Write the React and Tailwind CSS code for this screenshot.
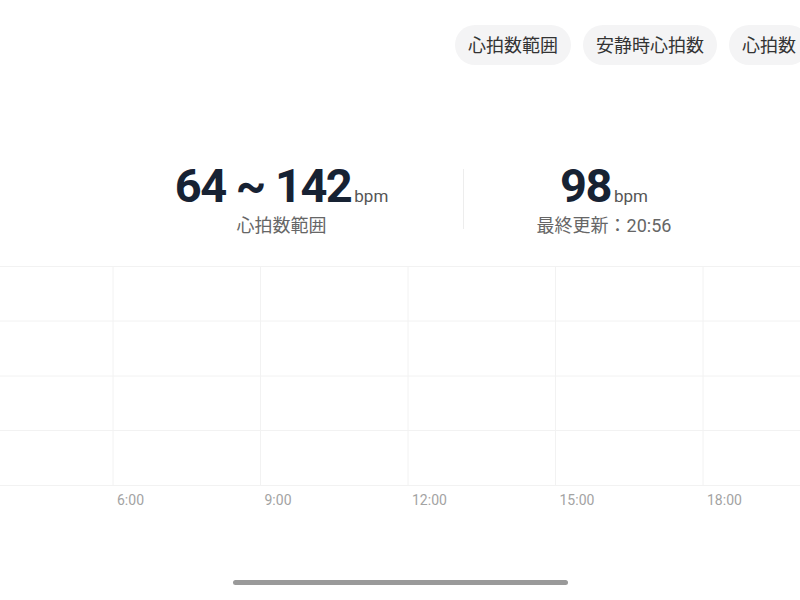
import React from "react";

const chips = ["心拍数範囲", "安静時心拍数", "心拍数"];
const hours = ["6:00", "9:00", "12:00", "15:00", "18:00"];

function Stat({ value, label, width }) {
  return (
    <div className={`flex flex-col items-center ${width}`}>
      <div className="flex items-baseline leading-none">
        <span className="text-[47px] font-bold tracking-[-1.5px] text-[#172233]">{value}</span>
        <span className="ml-[3px] text-[17px] text-[#555]">bpm</span>
      </div>
      <div className="mt-[8px] text-[18px] leading-none text-[#666]">{label}</div>
    </div>
  );
}

function Grid() {
  const xs = [113, 260.5, 408, 555.5, 703];
  const ys = [0.5, 55, 110, 164.5, 219.5];
  return (
    <svg width="800" height="220" className="block">
      {ys.map((y) => (
        <line key={y} x1="0" x2="800" y1={y} y2={y} stroke="#f2f2f2" strokeWidth="1" />
      ))}
      {xs.map((x) => (
        <line key={x} x1={x} x2={x} y1="0" y2="220" stroke="#f2f2f2" strokeWidth="1" />
      ))}
    </svg>
  );
}

export default function App() {
  return (
    <div
      className="w-[800px] h-[600px] bg-white overflow-hidden flex flex-col"
      style={{ fontFamily: '"Roboto", "Noto Sans CJK JP", sans-serif' }}
    >
      <div className="flex gap-3 pl-[455px] pt-[25px] whitespace-nowrap">
        {chips.map((c) => (
          <div
            key={c}
            className="h-[40px] px-[13px] rounded-full bg-[#f4f4f5] flex items-center text-[18px] text-[#333] shrink-0"
          >
            {c}
          </div>
        ))}
      </div>

      <div className="flex items-center mt-[97px] pl-[100px]">
        <Stat value="64 ~ 142" label="心拍数範囲" width="w-[363px]" />
        <div className="w-px h-[60px] bg-[#ededed]" />
        <Stat value="98" label="最終更新：20:56" width="w-[280px]" />
      </div>

      <div className="mt-[31px]">
        <Grid />
      </div>

      <div className="flex pl-[113px] mt-[4px]">
        {hours.map((h) => (
          <div key={h} className="w-[147.5px] shrink-0 pl-[4px] text-[14px] text-[#a3a3a3]">
            {h}
          </div>
        ))}
      </div>

      <div className="mt-[69px] ml-[233px] w-[335px] h-[5px] rounded-full bg-[#9a9a9a]" />
    </div>
  );
}
